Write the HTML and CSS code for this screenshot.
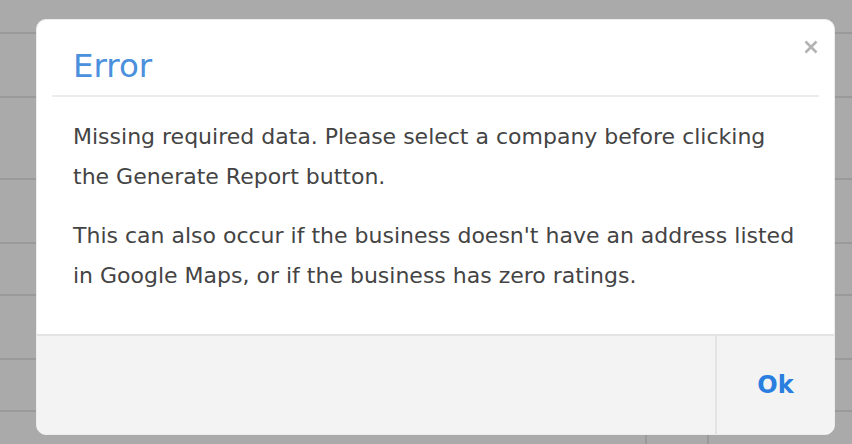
FILE: index.html
```html
<!DOCTYPE html>
<html lang="en">
<head>
<meta charset="utf-8">
<title>Error</title>
<link rel="stylesheet" href="styles.css">
</head>
<body>
<div class="backdrop">
  <div class="row r1"></div>
  <div class="row r2"></div>
  <div class="row r3"></div>
  <div class="row r4"></div>
  <div class="row r5"></div>
  <div class="row r6"></div>
  <div class="row r7"></div>
  <div class="row r8">
    <div class="cell c1"></div>
    <div class="cell c2"></div>
    <div class="cell c3"></div>
  </div>
</div>

<div class="modal" role="dialog">
  <button class="close" aria-label="Close">
    <svg width="14" height="14" viewBox="0 0 14 14"><path d="M1.5 1.5 L12.5 12.5 M12.5 1.5 L1.5 12.5" stroke="#b3b3b3" stroke-width="2.6" stroke-linecap="butt"/></svg>
  </button>
  <div class="modal-header">
    <h2 class="modal-title">Error</h2>
  </div>
  <div class="modal-body">
    <p>Missing required data. Please select a company before clicking the Generate Report button.</p>
    <p>This can also occur if the business doesn't have an address listed in Google Maps, or if the business has zero ratings.</p>
  </div>
  <div class="modal-footer">
    <div class="spacer"></div>
    <button class="ok">Ok</button>
  </div>
</div>
</body>
</html>
```

FILE: styles.css
```css
html, body {
  margin: 0;
  padding: 0;
}
body {
  width: 852px;
  height: 444px;
  overflow: hidden;
  background: #aaaaaa;
  font-family: "DejaVu Sans", Verdana, sans-serif;
  position: relative;
}
.backdrop {
  display: flex;
  flex-direction: column;
  height: 444px;
}
.row {
  border-bottom: 2px solid #9a9a9a;
  flex: none;
}
.r1 { height: 32px; }
.r2 { height: 62px; }
.r3 { height: 80px; }
.r4 { height: 62px; }
.r5 { height: 50px; }
.r6 { height: 62px; }
.r7 { height: 50px; }
.r8 {
  flex: 1;
  border-bottom: none;
  display: flex;
}
.cell { height: 100%; }
.c1 { width: 645px; }
.c2 { width: 60px; border-left: 2px solid #9a9a9a; }
.c3 { flex: 1; border-left: 2px solid #9a9a9a; }

.modal {
  position: absolute;
  left: 36px;
  top: 19px;
  width: 799px;
  height: 416px;
  box-sizing: border-box;
  background: #ffffff;
  border: 1px solid #ececec;
  border-radius: 10px;
  overflow: hidden;
  display: flex;
  flex-direction: column;
}
.close {
  position: absolute;
  top: 20px;
  right: 16px;
  padding: 0;
  border: 0;
  background: none;
  width: 14px;
  height: 14px;
  line-height: 0;
}
.modal-header {
  margin: 0 15px;
  border-bottom: 2px solid #ececec;
  box-sizing: border-box;
  flex: none;
  height: 77px;
}
.modal-title {
  margin: 0;
  padding: 28px 0 0 21px;
  font-weight: normal;
  font-size: 32.5px;
  line-height: 36px;
  color: #4a90dd;
}
.modal-body {
  flex: 1;
  padding: 20px 36px 0 36px;
}
.modal-body p {
  margin: 0 0 19px 0;
  font-size: 22px;
  line-height: 40px;
  color: #444444;
}
.modal-footer {
  flex: none;
  height: 98px;
  border-top: 2px solid #e3e3e3;
  background: #f3f3f3;
  display: flex;
}
.spacer { flex: 1; }
.ok {
  width: 119px;
  border: 0;
  border-left: 2px solid #e3e3e3;
  background: transparent;
  font-family: "DejaVu Sans", Verdana, sans-serif;
  font-weight: bold;
  font-size: 24px;
  color: #2a7ee0;
  padding: 0;
}
```
